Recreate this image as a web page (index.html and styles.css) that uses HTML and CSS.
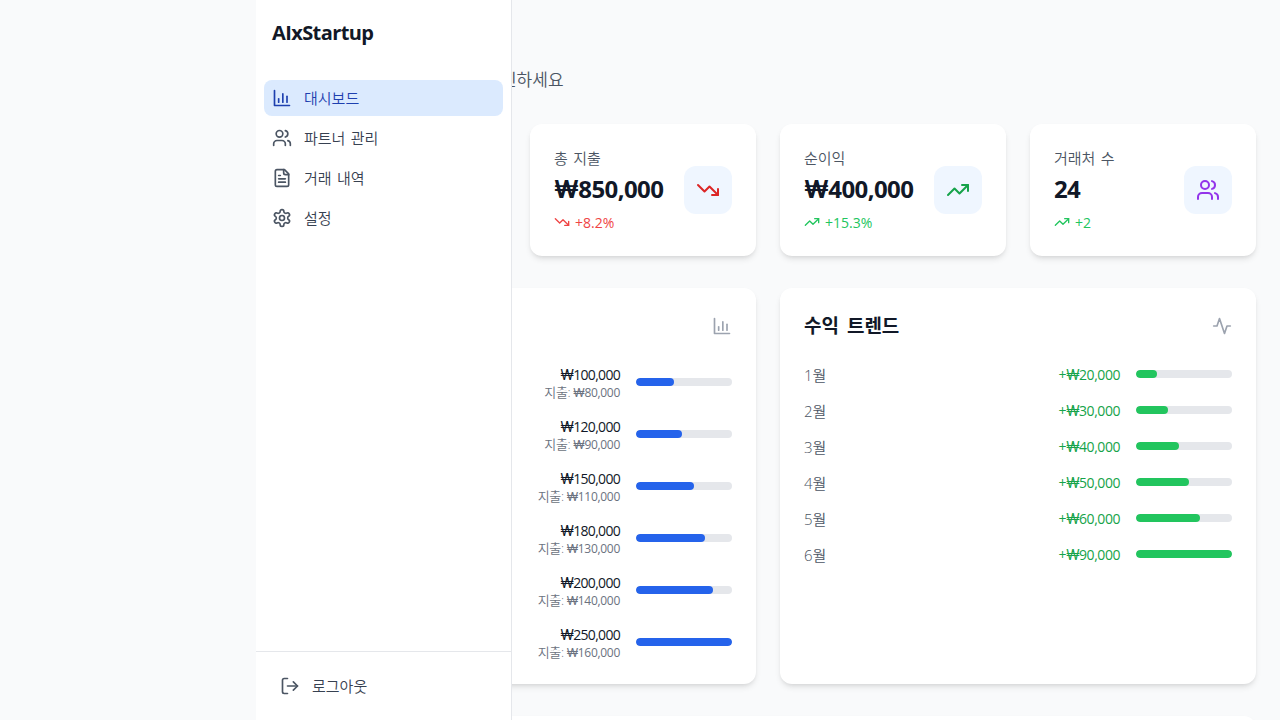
FILE: index.html
```html
<!DOCTYPE html>
<html lang="ko">
<head>
<meta charset="utf-8">
<title>AIxStartup</title>
<link rel="stylesheet" href="styles.css">
</head>
<body>
<div class="app">
  <div class="gutter"></div>
  <main class="main">
    <header class="head">
      <p class="page-sub">스타트업 재무 현황을 한눈에 확인하세요</p>
    </header>
    <section class="stats">
      <article class="card stat"></article>
      <article class="card stat">
        <div class="stat-body">
          <p class="stat-label">총 지출</p>
          <p class="stat-value"><span class="won">₩</span>850,000</p>
          <p class="stat-delta down">
            <svg class="delta-icon" viewBox="0 0 24 24"><path d="M22 17l-8.500-8.500-5 5L2 7"/><path d="M16 17h6v-6"/></svg>+8.2%</p>
        </div>
        <div class="stat-icon tone-red"><svg viewBox="0 0 24 24"><path d="M22 17l-8.500-8.500-5 5L2 7"/><path d="M16 17h6v-6"/></svg></div>
      </article>
      <article class="card stat">
        <div class="stat-body">
          <p class="stat-label">순이익</p>
          <p class="stat-value"><span class="won">₩</span>400,000</p>
          <p class="stat-delta up">
            <svg class="delta-icon" viewBox="0 0 24 24"><path d="M22 7l-8.500 8.500-5-5L2 17"/><path d="M16 7h6v6"/></svg>+15.3%</p>
        </div>
        <div class="stat-icon tone-green"><svg viewBox="0 0 24 24"><path d="M22 7l-8.500 8.500-5-5L2 17"/><path d="M16 7h6v6"/></svg></div>
      </article>
      <article class="card stat">
        <div class="stat-body">
          <p class="stat-label">거래처 수</p>
          <p class="stat-value">24</p>
          <p class="stat-delta up">
            <svg class="delta-icon" viewBox="0 0 24 24"><path d="M22 7l-8.500 8.500-5-5L2 17"/><path d="M16 7h6v6"/></svg>+2</p>
        </div>
        <div class="stat-icon tone-purple"><svg viewBox="0 0 24 24"><path d="M16 21v-2a4 4 0 0 0-4-4H6a4 4 0 0 0-4 4v2"/><circle cx="9" cy="7" r="4"/><path d="M22 21v-2a4 4 0 0 0-3-3.870"/><path d="M16 3.130a4 4 0 0 1 0 7.750"/></svg></div>
      </article>
    </section>
    <section class="charts">
      <article class="card chart">
        <div class="chart-head end">
          <svg class="chart-icon" viewBox="0 0 24 24"><path d="M3 3v18h18"/><path d="M8 17v-4"/><path d="M13 17V7"/><path d="M18 17v-7"/></svg>
        </div>
        <ul class="rows revenue">
          <li class="row"><div class="rev"><div class="amt"><span class="won">₩</span>100,000</div><div class="sub"><span class="sub-ko">지출:</span> <span class="won">₩</span>80,000</div></div><div class="track"><div class="fill blue" style="width:40%"></div></div></li>
          <li class="row"><div class="rev"><div class="amt"><span class="won">₩</span>120,000</div><div class="sub"><span class="sub-ko">지출:</span> <span class="won">₩</span>90,000</div></div><div class="track"><div class="fill blue" style="width:48%"></div></div></li>
          <li class="row"><div class="rev"><div class="amt"><span class="won">₩</span>150,000</div><div class="sub"><span class="sub-ko">지출:</span> <span class="won">₩</span>110,000</div></div><div class="track"><div class="fill blue" style="width:60%"></div></div></li>
          <li class="row"><div class="rev"><div class="amt"><span class="won">₩</span>180,000</div><div class="sub"><span class="sub-ko">지출:</span> <span class="won">₩</span>130,000</div></div><div class="track"><div class="fill blue" style="width:72%"></div></div></li>
          <li class="row"><div class="rev"><div class="amt"><span class="won">₩</span>200,000</div><div class="sub"><span class="sub-ko">지출:</span> <span class="won">₩</span>140,000</div></div><div class="track"><div class="fill blue" style="width:80%"></div></div></li>
          <li class="row"><div class="rev"><div class="amt"><span class="won">₩</span>250,000</div><div class="sub"><span class="sub-ko">지출:</span> <span class="won">₩</span>160,000</div></div><div class="track"><div class="fill blue" style="width:100%"></div></div></li>
        </ul>
      </article>
      <article class="card chart">
        <div class="chart-head">
          <h2 class="chart-title">수익 트렌드</h2>
          <svg class="chart-icon" viewBox="0 0 24 24"><path d="M22 12h-4l-3 9L9 3l-3 9H2"/></svg>
        </div>
        <ul class="rows profit">
          <li class="row"><span class="month">1월</span><div class="gain">+<span class="won">₩</span>20,000</div><div class="track"><div class="fill green" style="width:22.200%"></div></div></li>
          <li class="row"><span class="month">2월</span><div class="gain">+<span class="won">₩</span>30,000</div><div class="track"><div class="fill green" style="width:33.300%"></div></div></li>
          <li class="row"><span class="month">3월</span><div class="gain">+<span class="won">₩</span>40,000</div><div class="track"><div class="fill green" style="width:44.400%"></div></div></li>
          <li class="row"><span class="month">4월</span><div class="gain">+<span class="won">₩</span>50,000</div><div class="track"><div class="fill green" style="width:55.500%"></div></div></li>
          <li class="row"><span class="month">5월</span><div class="gain">+<span class="won">₩</span>60,000</div><div class="track"><div class="fill green" style="width:66.600%"></div></div></li>
          <li class="row"><span class="month">6월</span><div class="gain">+<span class="won">₩</span>90,000</div><div class="track"><div class="fill green" style="width:100%"></div></div></li>
        </ul>
      </article>
    </section>
    <section class="card lower"></section>
  </main>
  <aside class="sidebar">
    <div class="brand">AIxStartup</div>
    <nav class="nav">
      <a class="nav-item active"><svg viewBox="0 0 24 24"><path d="M3 3v18h18"/><path d="M8 17v-4"/><path d="M13 17V7"/><path d="M18 17v-7"/></svg><span class="nav-label">대시보드</span></a>
      <a class="nav-item"><svg viewBox="0 0 24 24"><path d="M16 21v-2a4 4 0 0 0-4-4H6a4 4 0 0 0-4 4v2"/><circle cx="9" cy="7" r="4"/><path d="M22 21v-2a4 4 0 0 0-3-3.870"/><path d="M16 3.130a4 4 0 0 1 0 7.750"/></svg><span class="nav-label">파트너 관리</span></a>
      <a class="nav-item"><svg viewBox="0 0 24 24"><path d="M15 2H6a2 2 0 0 0-2 2v16a2 2 0 0 0 2 2h12a2 2 0 0 0 2-2V7z"/><path d="M14 2v4a2 2 0 0 0 2 2h4"/><path d="M10 9H8"/><path d="M16 13H8"/><path d="M16 17H8"/></svg><span class="nav-label">거래 내역</span></a>
      <a class="nav-item"><svg viewBox="0 0 24 24"><path d="M12.220 2h-.440a2 2 0 0 0-2 2v.180a2 2 0 0 1-1 1.730l-.430.250a2 2 0 0 1-2 0l-.150-.080a2 2 0 0 0-2.730.730l-.220.380a2 2 0 0 0 .730 2.730l.150.100a2 2 0 0 1 1 1.720v.510a2 2 0 0 1-1 1.740l-.150.090a2 2 0 0 0-.730 2.730l.220.380a2 2 0 0 0 2.730.730l.150-.080a2 2 0 0 1 2 0l.430.250a2 2 0 0 1 1 1.730V20a2 2 0 0 0 2 2h.440a2 2 0 0 0 2-2v-.180a2 2 0 0 1 1-1.730l.430-.250a2 2 0 0 1 2 0l.150.080a2 2 0 0 0 2.730-.730l.220-.390a2 2 0 0 0-.730-2.730l-.150-.080a2 2 0 0 1-1-1.740v-.500a2 2 0 0 1 1-1.740l.150-.090a2 2 0 0 0 .730-2.730l-.220-.380a2 2 0 0 0-2.730-.730l-.150.080a2 2 0 0 1-2 0l-.430-.250a2 2 0 0 1-1-1.730V4a2 2 0 0 0-2-2z"/><circle cx="12" cy="12" r="3"/></svg><span class="nav-label">설정</span></a>
    </nav>
    <div class="side-foot">
      <a class="logout"><svg viewBox="0 0 24 24"><path d="M9 21H5a2 2 0 0 1-2-2V5a2 2 0 0 1 2-2h4"/><path d="M16 17l5-5-5-5"/><path d="M21 12H9"/></svg><span class="nav-label">로그아웃</span></a>
    </div>
  </aside>
</div>
</body>
</html>
```
FILE: styles.css
```css
* { box-sizing: border-box; }
html, body { margin: 0; padding: 0; height: 720px; overflow: hidden; }
body {
  background: #f9fafb;
  color: #111827;
  font-family: "Open Sans", "Noto Sans CJK KR", sans-serif;
}
p, h2, ul { margin: 0; padding: 0; }
ul { list-style: none; }
svg { fill: none; stroke: currentColor; stroke-width: 2; stroke-linecap: round; stroke-linejoin: round; flex: none; display: block; }

.app { display: flex; height: 720px; position: relative; }
.gutter { width: 256px; flex: none; }
.main { width: 1024px; height: 720px; padding: 24px; overflow: hidden; }
.won { font-family: Inter, "Open Sans", sans-serif; }

.head { height: 76px; margin-bottom: 24px; padding-top: 44px; }
.page-sub { font-size: 17px; line-height: 24px; color: #4b5563; font-weight: 350; white-space: nowrap; }

.stats { display: grid; grid-template-columns: repeat(4, 1fr); gap: 24px; margin-bottom: 32px; }
.card { background: #fff; border-radius: 12px; box-shadow: 0 4px 6px -1px rgba(0,0,0,.1), 0 2px 4px -2px rgba(0,0,0,.1); }
.stat { height: 132px; padding: 24px; display: flex; align-items: center; justify-content: space-between; }
.stat-label { font-size: 15px; line-height: 20px; color: #4b5563; margin-bottom: 4px; word-spacing: 1.500px; font-weight: 350; }
.stat-value { font-size: 24px; height: 32px; padding-top: 1px; line-height: 32px; font-weight: 700; letter-spacing: -.6px; }
.stat-delta { font-size: 14px; line-height: 20px; margin-top: 8px; height: 20px; padding-top: 1px; display: flex; align-items: center; gap: 5px; }
.up { color: #22c55e; }
.down { color: #ef4444; }
.delta-icon { width: 16px; height: 16px; margin-top: -1px; }
.stat-icon { width: 48px; height: 48px; border-radius: 12px; background: #eff6ff; display: flex; align-items: center; justify-content: center; }
.stat-icon svg { width: 24px; height: 24px; }
.tone-red { color: #dc2626; }
.tone-green { color: #16a34a; }
.tone-purple { color: #9333ea; }

.charts { display: grid; grid-template-columns: 1fr 1fr; gap: 24px; margin-bottom: 32px; }
.chart { height: 396px; padding: 24px; }
.chart-head { display: flex; justify-content: space-between; align-items: center; height: 28px; margin-bottom: 24px; }
.end { justify-content: flex-end; }
.chart-title { font-size: 19px; line-height: 28px; font-weight: 700; word-spacing: 3px; }
.chart-icon { width: 20px; height: 20px; color: #9ca3af; }
.lower { height: 200px; }

.rows { display: flex; flex-direction: column; gap: 16px; }
.row { display: flex; align-items: center; justify-content: flex-end; height: 20px; }
.revenue .row { height: 36px; }
.month { font-size: 15px; height: 20px; padding-top: 1px; line-height: 20px; color: #4b5563; flex: 1; font-weight: 350; }
.rev { text-align: right; margin-right: 16px; }
.amt { font-size: 14px; height: 20px; padding-top: 1px; line-height: 20px; color: #111827; letter-spacing: -.7px; }
.sub { font-size: 12px; height: 16px; line-height: 16px; color: #6b7280; letter-spacing: -.3px; }
.sub-ko { font-size: 13px; font-weight: 350; }
.gain { font-size: 14px; height: 20px; padding-top: 1px; line-height: 20px; color: #16a34a; margin-right: 16px; letter-spacing: -.45px; }
.track { width: 96px; height: 8px; background: #e5e7eb; border-radius: 9999px; overflow: hidden; flex: none; }
.fill { height: 100%; border-radius: 9999px; }
.blue { background: #2563eb; }
.green { background: #22c55e; }

.sidebar {
  position: absolute; left: 256px; top: 0; width: 256px; height: 720px;
  background: #fff; border-right: 1px solid #e5e7eb;
  display: flex; flex-direction: column;
}
.brand { height: 64px; padding: 0 16px; display: flex; align-items: center; font-size: 20px; font-weight: 700; letter-spacing: -.6px; }
.nav { padding: 16px 8px; display: flex; flex-direction: column; gap: 4px; flex: 1; }
.nav-item { height: 36px; display: flex; align-items: center; gap: 12px; padding: 0 8px; border-radius: 8px; font-size: 15px; font-weight: 350; word-spacing: 1.500px; color: #374151; }
.nav-label { padding-bottom: 2px; }
.nav-item svg { width: 20px; height: 20px; color: #4b5563; }
.active { background: #dbeafe; color: #1e40af; }
.active svg { color: #1e40af; }
.side-foot { border-top: 1px solid #e5e7eb; padding: 16px; height: 69px; }
.logout { height: 36px; display: flex; align-items: center; gap: 12px; padding: 0 8px; font-size: 15px; font-weight: 350; color: #374151; }
.logout svg { width: 20px; height: 20px; color: #4b5563; }
```
